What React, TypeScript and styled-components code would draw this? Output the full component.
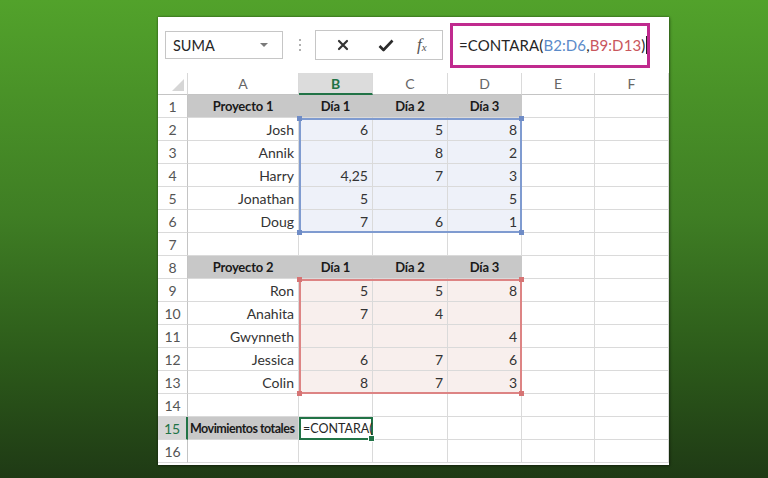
import styled, { createGlobalStyle } from "styled-components";

const GlobalStyle = createGlobalStyle`
  html, body {
    margin: 0;
    padding: 0;
    height: 100%;
  }
  body {
    font-family: Lato, "Open Sans", "Liberation Sans", sans-serif;
    background: linear-gradient(180deg, #52a22b 0%, #3f7e24 45%, #2c5a1a 75%, #1f3a15 100%);
    overflow: hidden;
  }
`;

type Fill = "none" | "blue" | "red" | "head" | "total";

const fills: Record<Fill, string> = {
  none: "#ffffff",
  blue: "#eef1f9",
  red: "#f8efed",
  head: "#c8c8c8",
  total: "#c8c8c8",
};

const COLS = ["A", "B", "C", "D", "E", "F"];

type Row = {
  cells: string[];
  fill?: Fill;
};

// rows 1..16, columns A..D (E, F always empty)
const rows: Row[] = [
  { cells: ["Proyecto 1", "Día 1", "Día 2", "Día 3"], fill: "head" },
  { cells: ["Josh", "6", "5", "8"], fill: "blue" },
  { cells: ["Annik", "", "8", "2"], fill: "blue" },
  { cells: ["Harry", "4,25", "7", "3"], fill: "blue" },
  { cells: ["Jonathan", "5", "", "5"], fill: "blue" },
  { cells: ["Doug", "7", "6", "1"], fill: "blue" },
  { cells: ["", "", "", ""] },
  { cells: ["Proyecto 2", "Día 1", "Día 2", "Día 3"], fill: "head" },
  { cells: ["Ron", "5", "5", "8"], fill: "red" },
  { cells: ["Anahita", "7", "4", ""], fill: "red" },
  { cells: ["Gwynneth", "", "", "4"], fill: "red" },
  { cells: ["Jessica", "6", "7", "6"], fill: "red" },
  { cells: ["Colin", "8", "7", "3"], fill: "red" },
  { cells: ["", "", "", ""] },
  { cells: ["Movimientos totales", "=CONTARA(", "", ""] },
  { cells: ["", "", "", ""] },
];

const App = () => {
  return (
    <>
      <GlobalStyle />
      <Page>
        <Sheet>
          <Toolbar>
            <NameBox>
              SUMA
              <Caret />
            </NameBox>
            <Dots>
              <span />
              <span />
              <span />
            </Dots>
            <FuncBox>
              <IconBtn>
                <svg width="12" height="12" viewBox="0 0 12 12">
                  <path d="M2 2 L10 10 M10 2 L2 10" stroke="#333" strokeWidth="2.2" strokeLinecap="round" />
                </svg>
              </IconBtn>
              <IconBtn>
                <svg width="16" height="13" viewBox="0 0 16 13">
                  <path d="M1.5 7 L5.5 11 L14.5 1.5" stroke="#2b2b2b" strokeWidth="2.6" fill="none" strokeLinejoin="round" />
                </svg>
              </IconBtn>
              <Fx>
                f<sub>x</sub>
              </Fx>
            </FuncBox>
            <FormulaBox>
              =CONTARA(<RefBlue>B2:D6</RefBlue>,<RefRed>B9:D13</RefRed>)
              <Cursor />
            </FormulaBox>
          </Toolbar>

          <GridWrap>
            <Grid>
              <Corner>
                <svg width="12" height="12" viewBox="0 0 12 12">
                  <polygon points="12,0 12,12 0,12" fill="#d6d6d6" />
                </svg>
              </Corner>
              {COLS.map((c) => (
                <ColHead key={c} $active={c === "B"}>
                  {c}
                </ColHead>
              ))}

              {rows.map((row, i) => {
                const n = i + 1;
                return [
                  <RowHead key={`h${n}`} $active={n === 15}>
                    {n}
                  </RowHead>,
                  ...COLS.map((c, ci) => {
                    const text = row.cells[ci] ?? "";
                    let fill: Fill = "none";
                    if (row.fill === "head" && ci < 4) fill = "head";
                    if ((row.fill === "blue" || row.fill === "red") && ci >= 1 && ci <= 3) fill = row.fill;
                    if (n === 15 && ci === 0) fill = "total";
                    if (n === 15 && ci === 1) {
                      return (
                        <ActiveCell key={`${c}${n}`}>
                          <ActiveText>{text}</ActiveText>
                        </ActiveCell>
                      );
                    }
                    return (
                      <Cell
                        key={`${c}${n}`}
                        $fill={fill}
                        $center={row.fill === "head"}
                        $bold={row.fill === "head"}
                        $total={fill === "total"}
                      >
                        {text}
                      </Cell>
                    );
                  }),
                ];
              })}
            </Grid>

            <Range $color="#7f9bd0" $top={45} $height={115}>
              <Handle $color="#6f8cc6" $pos="tl" />
              <Handle $color="#6f8cc6" $pos="tr" />
              <Handle $color="#6f8cc6" $pos="bl" />
              <Handle $color="#6f8cc6" $pos="br" />
            </Range>
            <Range $color="#dd8484" $top={206} $height={115}>
              <Handle $color="#d67474" $pos="tl" />
              <Handle $color="#d67474" $pos="tr" />
              <Handle $color="#d67474" $pos="bl" />
              <Handle $color="#d67474" $pos="br" />
            </Range>
          </GridWrap>
        </Sheet>
      </Page>
    </>
  );
};

export default App;

const Page = styled.div`
  width: 768px;
  height: 478px;
  padding: 17px 0 0 158px;
  box-sizing: border-box;
`;

const Sheet = styled.div`
  width: 511px;
  height: 448px;
  background: #ffffff;
  box-shadow: 0 0 2px rgba(0, 0, 0, 0.45), 1px 1px 3px rgba(0, 0, 0, 0.3);
  overflow: hidden;
`;

const Toolbar = styled.div`
  height: 56px;
  display: flex;
  align-items: center;
  background: #fff;
`;

const NameBox = styled.div`
  margin-left: 7px;
  width: 118px;
  height: 28px;
  box-sizing: border-box;
  border: 1px solid #c6c6c6;
  display: flex;
  align-items: center;
  justify-content: space-between;
  padding: 0 14px 0 7px;
  font-size: 14.5px;
  color: #262626;
`;

const Caret = styled.span`
  width: 0;
  height: 0;
  border-left: 4px solid transparent;
  border-right: 4px solid transparent;
  border-top: 4px solid #7a7a7a;
`;

const Dots = styled.div`
  margin-left: 16px;
  display: flex;
  flex-direction: column;
  gap: 3px;

  span {
    width: 2px;
    height: 2px;
    background: #b0b0b0;
  }
`;

const FuncBox = styled.div`
  margin-left: 14px;
  width: 128px;
  height: 30px;
  box-sizing: border-box;
  border: 1px solid #c6c6c6;
  display: flex;
  align-items: center;
  justify-content: space-around;
  padding: 0 6px;
`;

const IconBtn = styled.span`
  display: flex;
  align-items: center;
  justify-content: center;
  width: 24px;
`;

const Fx = styled.span`
  font-family: "Liberation Serif", serif;
  font-style: italic;
  font-size: 17px;
  color: #555;

  sub {
    font-size: 11px;
    vertical-align: -1px;
  }
`;

const FormulaBox = styled.div`
  margin-left: 7px;
  width: 200px;
  height: 45px;
  box-sizing: border-box;
  border: 3px solid #c02a8e;
  display: flex;
  align-items: center;
  padding-left: 6px;
  font-size: 15px;
  letter-spacing: 0.1px;
  color: #262626;
  white-space: nowrap;
`;

const RefBlue = styled.span`
  color: #5b8bc9;
`;

const RefRed = styled.span`
  color: #c9575d;
`;

const Cursor = styled.span`
  width: 1px;
  height: 18px;
  background: #222;
  margin-left: 1px;
`;

const GridWrap = styled.div`
  position: relative;
`;

const Grid = styled.div`
  display: grid;
  grid-template-columns: 30px 111px 74px 75px 74px 73px 74px;
  grid-template-rows: 22px repeat(16, 23px);
`;

const Corner = styled.div`
  display: flex;
  align-items: flex-end;
  justify-content: flex-end;
  padding: 0 3px 3px 0;
  border-right: 1px solid #d8d8d8;
  border-bottom: 1px solid #c4c4c4;
`;

const ColHead = styled.div<{ $active?: boolean }>`
  display: flex;
  align-items: center;
  justify-content: center;
  box-sizing: border-box;
  font-size: 14px;
  color: ${(p) => (p.$active ? "#217346" : "#666")};
  font-weight: ${(p) => (p.$active ? 700 : 400)};
  background: ${(p) => (p.$active ? "#dcdcdc" : "#fff")};
  border-right: 1px solid #dadada;
  border-bottom: ${(p) => (p.$active ? "2px solid #217346" : "1px solid #c4c4c4")};
`;

const RowHead = styled.div<{ $active?: boolean }>`
  display: flex;
  align-items: center;
  justify-content: center;
  box-sizing: border-box;
  font-size: 14px;
  color: ${(p) => (p.$active ? "#217346" : "#555")};
  background: ${(p) => (p.$active ? "#d6d6d6" : "#fff")};
  border-right: ${(p) => (p.$active ? "2px solid #217346" : "1px solid #c4c4c4")};
  border-bottom: 1px solid #dadada;
`;

const Cell = styled.div<{ $fill: Fill; $center?: boolean; $bold?: boolean; $total?: boolean }>`
  display: flex;
  align-items: center;
  justify-content: ${(p) => (p.$center ? "center" : "flex-end")};
  box-sizing: border-box;
  padding: 0 4px;
  background: ${(p) => fills[p.$fill]};
  border-right: 1px solid ${(p) => (p.$fill === "head" ? "#c8c8c8" : "#dadada")};
  border-bottom: 1px solid #dadada;
  font-size: ${(p) => (p.$total ? "12.5px" : p.$bold ? "13px" : "14px")};
  font-weight: ${(p) => (p.$bold || p.$total ? 700 : 400)};
  letter-spacing: ${(p) => (p.$total ? "-0.5px" : p.$bold ? "-0.2px" : "0")};
  color: ${(p) => (p.$total || p.$bold ? "#1a1a1a" : "#333")};
  white-space: nowrap;
  overflow: hidden;
  ${(p) => p.$total && "padding: 0 1px 0 2px; justify-content: flex-start;"}
`;

const ActiveCell = styled.div`
  position: relative;
  box-sizing: border-box;
  border: 2px solid #217346;
  display: flex;
  align-items: center;
  background: #fff;

  &::after {
    content: "";
    position: absolute;
    right: -4px;
    bottom: -4px;
    width: 5px;
    height: 5px;
    background: #217346;
    border: 1px solid #fff;
  }
`;

const ActiveText = styled.span`
  display: block;
  white-space: nowrap;
  font-size: 12.5px;
  color: #262626;
  padding-left: 2px;
`;

const Range = styled.div<{ $color: string; $top: number; $height: number }>`
  position: absolute;
  left: 141px;
  top: ${(p) => p.$top}px;
  width: 223px;
  height: ${(p) => p.$height}px;
  box-sizing: border-box;
  border: 2px solid ${(p) => p.$color};
  pointer-events: none;
`;

const Handle = styled.span<{ $color: string; $pos: "tl" | "tr" | "bl" | "br" }>`
  position: absolute;
  width: 5px;
  height: 5px;
  background: ${(p) => p.$color};
  ${(p) => (p.$pos[0] === "t" ? "top: -4px;" : "bottom: -4px;")}
  ${(p) => (p.$pos[1] === "l" ? "left: -4px;" : "right: -4px;")}
`;
